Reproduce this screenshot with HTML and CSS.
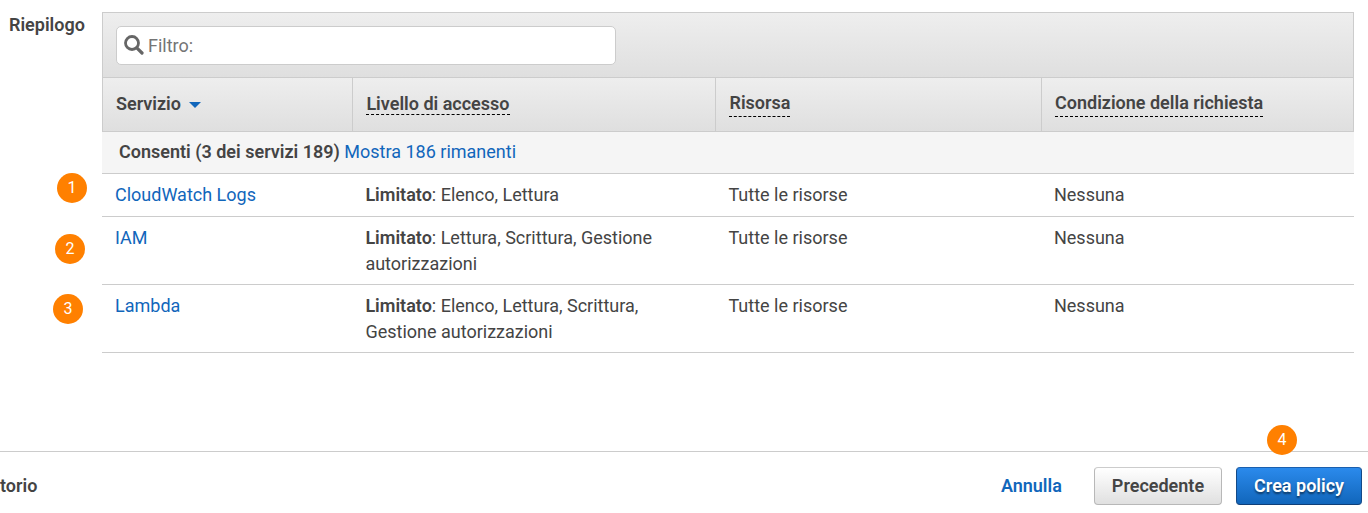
FILE: index.html
```html
<!DOCTYPE html>
<html lang="it">
<head>
    <meta charset="UTF-8">
    <meta name="viewport" content="width=device-width, initial-scale=1.0">
    <title>Crea policy</title>
    <link rel="stylesheet" href="styles.css">
</head>
<body>
    <main class="summary">
        <h1 class="summary-label">Riepilogo</h1>
        <section class="panel">
            <div class="toolbar">
                <div class="search">
                    <svg class="search-icon" viewBox="0 0 20 20" aria-hidden="true">
                        <circle cx="8" cy="8" r="6.5" fill="none" stroke="#666" stroke-width="2.8"/>
                        <path d="M12.8 12.8L18 18" stroke="#666" stroke-width="3.2" stroke-linecap="round"/>
                    </svg>
                    <input class="search-input" type="text" placeholder="Filtro:" aria-label="Filtro">
                </div>
            </div>
            <table class="services">
                <thead>
                    <tr>
                        <th class="col-service">Servizio <span class="sort-arrow"></span></th>
                        <th class="col-access"><span class="hint">Livello di accesso</span></th>
                        <th class="col-resource"><span class="hint hint-low">Risorsa</span></th>
                        <th class="col-condition"><span class="hint hint-low">Condizione della richiesta</span></th>
                    </tr>
                </thead>
                <tbody>
                    <tr class="group">
                        <td colspan="4"><b>Consenti (3 dei servizi 189)</b> <a href="#">Mostra 186 rimanenti</a></td>
                    </tr>
                    <tr>
                        <td><span class="badge badge-1">1</span><a href="#">CloudWatch Logs</a></td>
                        <td><b>Limitato</b>: Elenco, Lettura</td>
                        <td>Tutte le risorse</td>
                        <td>Nessuna</td>
                    </tr>
                    <tr>
                        <td><span class="badge badge-2">2</span><a href="#">IAM</a></td>
                        <td><b>Limitato</b>: Lettura, Scrittura, Gestione autorizzazioni</td>
                        <td>Tutte le risorse</td>
                        <td>Nessuna</td>
                    </tr>
                    <tr>
                        <td><span class="badge badge-3">3</span><a href="#">Lambda</a></td>
                        <td><b>Limitato</b>: Elenco, Lettura, Scrittura, Gestione autorizzazioni</td>
                        <td>Tutte le risorse</td>
                        <td>Nessuna</td>
                    </tr>
                </tbody>
            </table>
        </section>
    </main>
    <footer class="actions">
        <span class="required">torio</span>
        <a class="cancel" href="#">Annulla</a>
        <button class="btn" type="button">Precedente</button>
        <div class="primary-action">
            <span class="badge badge-4">4</span>
            <button class="btn btn-primary" type="button">Crea policy</button>
        </div>
    </footer>
</body>
</html>
```

FILE: styles.css
```css
* {
    box-sizing: border-box;
}
body {
    margin: 0;
    min-height: 100vh;
    display: flex;
    flex-direction: column;
    font-family: Roboto, "Liberation Sans", sans-serif;
    font-size: 18px;
    line-height: 26px;
    color: #444;
    background: #fff;
}
a {
    color: #1166bb;
    text-decoration: none;
}
b, th {
    font-weight: 600;
}
.summary {
    flex: 1;
    display: flex;
    align-items: flex-start;
    padding: 12px 14px 0 0;
}
.summary-label {
    flex: none;
    width: 102px;
    margin: 0;
    padding-left: 9px;
    font-size: 18px;
    font-weight: 600;
    line-height: 26px;
}
.panel {
    flex: 1;
}

/* filter bar */
.toolbar {
    padding: 13px 13px 12px;
    border: 1px solid #ccc;
    border-bottom: none;
    background: linear-gradient(#eee, #dfdfdf);
}
.search {
    display: flex;
    align-items: center;
    max-width: 500px;
    height: 39px;
    padding: 0 7px;
    border: 1px solid #ccc;
    border-radius: 5px;
    background: #fff;
}
.search-icon {
    flex: none;
    width: 20px;
    height: 20px;
    margin-bottom: 2px;
}
.search-input {
    flex: 1;
    padding: 0 4px;
    border: none;
    outline: none;
    background: none;
    font: inherit;
    color: #444;
}
.search-input::placeholder {
    color: #757575;
}

/* services table */
.services {
    width: 100%;
    table-layout: fixed;
    border-spacing: 0;
    border-collapse: separate;
}
.services th {
    height: 55px;
    padding: 0 12px 2px 13px;
    text-align: left;
    border: 1px solid #ccc;
    border-right: none;
    background: linear-gradient(#eee, #dfdfdf);
}
.services th:last-child {
    border-right: 1px solid #ccc;
}
.col-service {
    width: 20%;
}
.col-access {
    width: 29%;
}
.col-resource {
    width: 26%;
}
.col-condition {
    width: 25%;
}
.sort-arrow {
    display: inline-block;
    margin-left: 4px;
    border: 6px solid transparent;
    border-top-color: #1166bb;
    border-bottom: none;
    vertical-align: middle;
}
.hint {
    border-bottom: 1px dashed #000;
}
.hint-low {
    display: inline-block;
}
.services td {
    position: relative;
    height: 43px;
    padding: 8px 13px 7px;
    vertical-align: top;
    border-bottom: 1px solid #ccc;
}
.services .group td {
    height: 42px;
    padding: 7px 17px 8px;
    background: #f5f5f5;
}

/* numbered callouts */
.badge {
    position: absolute;
    width: 30px;
    height: 30px;
    border-radius: 50%;
    background: #ff8000;
    color: #fff;
    font-size: 16px;
    font-weight: 400;
    line-height: 30px;
    text-align: center;
}
.badge-1 {
    top: -1px;
    left: -45px;
}
.badge-2 {
    top: 17px;
    left: -47px;
}
.badge-3 {
    top: 9px;
    left: -49px;
}
.badge-4 {
    top: -42px;
    right: 65px;
}

/* bottom bar */
.actions {
    display: flex;
    align-items: center;
    gap: 14px;
    padding: 15px 6px 8px 0;
    border-top: 1px solid #ccc;
    font-weight: 600;
}
.required {
    flex: 1;
}
.cancel {
    margin-right: 18px;
}
.primary-action {
    position: relative;
}
.btn {
    height: 38px;
    padding: 0 17px;
    border: 1px solid #b8b8b8;
    border-top-color: #ccc;
    border-radius: 4px;
    background: linear-gradient(#fff, #e0e0e0);
    font: inherit;
    color: #444;
    cursor: pointer;
}
.btn-primary {
    display: block;
    border-color: #1a5fae #134a88 #0f3f78;
    background: linear-gradient(#2b8aec, #1166bb);
    color: #fff;
    text-shadow: 0 2px 2px rgba(0, 0, 0, 0.5);
}
```
